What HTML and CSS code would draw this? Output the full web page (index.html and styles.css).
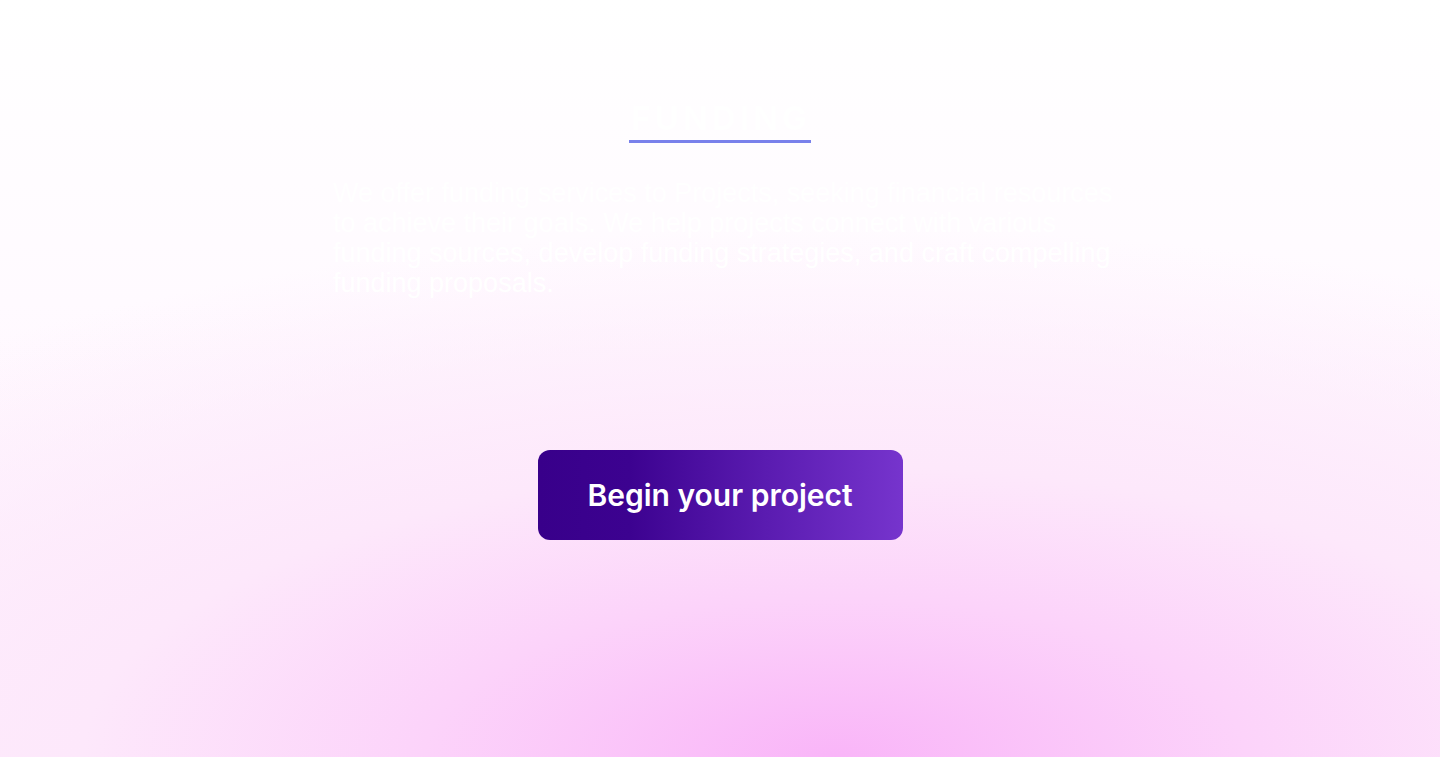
FILE: index.html
```html
<!DOCTYPE html>
<html lang="en">
<head>
<meta charset="utf-8">
<title>Funding</title>
<link rel="stylesheet" href="styles.css">
</head>
<body>
<main class="page">
  <section class="intro">
    <h1 class="title">FUNDING</h1>
    <p class="lead">We offer funding services to Projects, seeking financial resources to achieve their goals. We help projects connect with various funding sources, develop funding strategies, and craft compelling funding proposals.</p>
  </section>
  <div class="cta">
    <a class="btn" href="#">Begin your project</a>
  </div>
</main>
</body>
</html>
```

FILE: styles.css
```css
* { box-sizing: border-box; }
html, body { margin: 0; height: 100%; }
body {
  font-family: Inter, "Noto Sans", "Liberation Sans", sans-serif;
  background-color: #ffffff;
  background-image:
    radial-gradient(ellipse 95% 70% at 58% 100%, #f9b5f8 0%, #fcd3fa 30%, #fde8fb 55%, rgba(255,255,255,0) 100%),
    linear-gradient(180deg, #ffffff 0%, #fffaff 40%, #fdeefc 100%);
  min-height: 757px;
}
.page {
  display: flex;
  flex-direction: column;
  align-items: center;
  padding-top: 96px;
}
.intro {
  display: flex;
  flex-direction: column;
  align-items: center;
  width: 790px;
}
.title {
  margin: 0;
  color: #ffffff;
  font-size: 33px;
  font-weight: 700;
  letter-spacing: 4px;
  line-height: 44px;
  border-bottom: 3px solid #7981eb;
  padding: 0 0 0 2px;
}
.lead {
  margin: 35px 0 0;
  align-self: stretch;
  padding-left: 8px;
  color: #ffffff;
  font-family: "Liberation Sans", Arial, sans-serif;
  font-size: 27px;
  line-height: 30px;
}
.cta {
  margin-top: 152px;
}
.btn {
  display: flex;
  align-items: center;
  justify-content: center;
  width: 365px;
  height: 90px;
  border-radius: 12px;
  background: linear-gradient(90deg, #38008a 0%, #3c0290 25%, #5a1bb0 62%, #7634cd 100%);
  color: #ffffff;
  font-size: 30px;
  font-weight: 600;
  text-decoration: none;
}
```
